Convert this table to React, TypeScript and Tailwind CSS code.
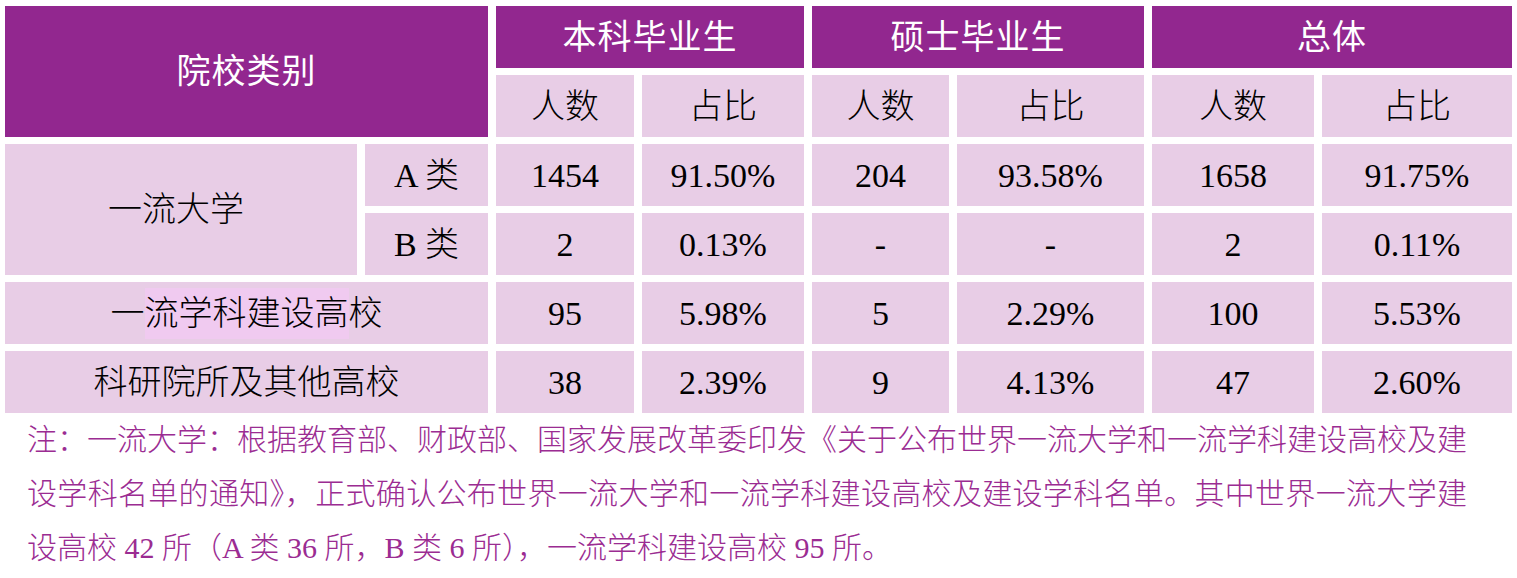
const serif = '[font-family:"Liberation_Serif","Noto_Sans_CJK_SC",serif]'

const head = 'flex items-center justify-center bg-[#92278f] text-white text-[34px] tracking-[1px] [font-family:"Liberation_Sans","Noto_Sans_CJK_SC",sans-serif]'
const cell = `flex items-center justify-center bg-[#e8cde6] text-black text-[34px] font-light ${serif}`

type Row = { sub: string; values: string[] }

const rows: Row[] = [
  { sub: 'A 类', values: ['1454', '91.50%', '204', '93.58%', '1658', '91.75%'] },
  { sub: 'B 类', values: ['2', '0.13%', '-', '-', '2', '0.11%'] },
]

const wideRows: { label: React.ReactNode; values: string[] }[] = [
  {
    label: (
      <>
        一<span className="bg-[#f0caf0]">流学科建设高</span>校
      </>
    ),
    values: ['95', '5.98%', '5', '2.29%', '100', '5.53%'],
  },
  { label: '科研院所及其他高校', values: ['38', '2.39%', '9', '4.13%', '47', '2.60%'] },
]

export default function App() {
  return (
    <div className="w-[1517px] h-[578px] bg-white pt-[6px] pl-[5px] overflow-hidden">
      <div className="grid grid-cols-[352px_123px_138px_162px_137px_187px_162px_190px] auto-rows-[62px] gap-x-[8px] gap-y-[7px]">
        {/* header */}
        <div className={`${head} col-span-2 row-span-2`}>院校类别</div>
        <div className={`${head} col-span-2`}>本科毕业生</div>
        <div className={`${head} col-span-2`}>硕士毕业生</div>
        <div className={`${head} col-span-2`}>总体</div>
        {['人数', '占比', '人数', '占比', '人数', '占比'].map((t, i) => (
          <div className={cell} key={i}>
            {t}
          </div>
        ))}

        {/* 一流大学 */}
        <div className={`${cell} row-span-2 pr-[10px]`}>一流大学</div>
        {rows.map((r, ri) => (
          <div className="contents" key={ri}>
            <div className={cell}>{r.sub}</div>
            {r.values.map((v, i) => (
              <div className={cell} key={i}>
                {v}
              </div>
            ))}
          </div>
        ))}

        {wideRows.map((r, ri) => (
          <div className="contents" key={ri}>
            <div className={`${cell} col-span-2`}>{r.label}</div>
            {r.values.map((v, i) => (
              <div className={cell} key={i}>
                {v}
              </div>
            ))}
          </div>
        ))}
      </div>

      {/* note */}
      <div className={`pl-[22px] w-[1462px] text-[30px] leading-[54px] font-light text-[#9b2c92] ${serif}`}>
        <div className="text-justify [text-align-last:justify] whitespace-nowrap">
          注：一流大学：根据教育部、财政部、国家发展改革委印发《关于公布世界一流大学和一流学科建设高校及建
        </div>
        <div className="text-justify [text-align-last:justify] whitespace-nowrap">
          设学科名单的通知》，正式确认公布世界一流大学和一流学科建设高校及建设学科名单。其中世界一流大学建
        </div>
        <div className="whitespace-nowrap">设高校 42 所（A 类 36 所，B 类 6 所），一流学科建设高校 95 所。</div>
      </div>
    </div>
  )
}
